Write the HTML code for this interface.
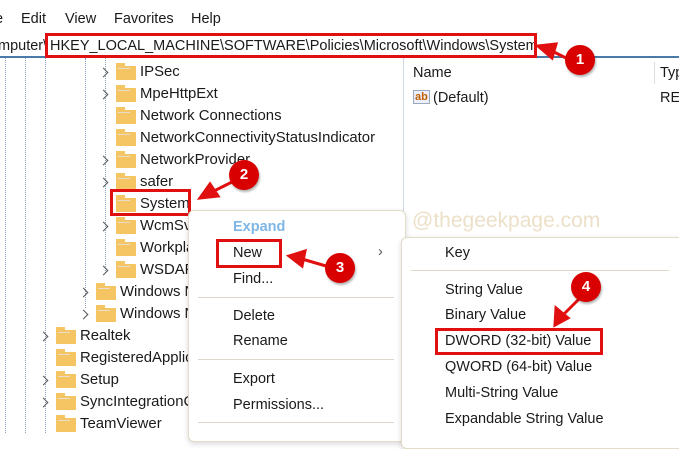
<!DOCTYPE html><html><head><style>
body{margin:0;width:679px;height:433px;overflow:hidden;background:#fff;font-family:"Liberation Sans",sans-serif;font-size:14.5px;color:#1a1a1a;position:relative}
.a{position:absolute;white-space:nowrap}
.t{font-size:14.9px}
.f{position:absolute;width:20px;height:14px;background:#f5c463}
.f:before{content:"";position:absolute;left:0;top:-3px;width:9px;height:3px;background:#f5c463}
.f:after{content:"";position:absolute;left:2px;top:2px;width:12px;height:1px;background:#e8dccb}
.c{position:absolute;width:6px;height:6px;border-right:1.5px solid #555;border-bottom:1.5px solid #555;transform:rotate(-45deg)}
.v{position:absolute;border-left:1px dotted #8aa0c0}
.m{position:absolute;background:#fff;border:1px solid #e2dcc8;border-radius:6px;box-shadow:0 2px 6px rgba(0,0,0,.15)}
.sep{position:absolute;height:1px;background:#ddd8c8}
.rb{position:absolute;border:3px solid #e01010}
.n{position:absolute;width:30px;height:30px;border-radius:50%;background:#d80000;color:#fff;font-weight:bold;font-size:15px;text-align:center;line-height:30px;box-shadow:1px 2px 2px rgba(0,0,0,.3)}
</style></head><body>
<div class="a" style="left:-5px;top:11px">e</div>
<div class="a" style="left:21px;top:11px">Edit</div>
<div class="a" style="left:65px;top:11px">View</div>
<div class="a" style="left:114px;top:11px">Favorites</div>
<div class="a" style="left:191px;top:11px">Help</div>
<div style="position:absolute;left:0;top:56px;width:679px;height:2px;background:#4a7aa8"></div>
<div class="a" style="left:-2px;top:38px">mputer\</div>
<div class="a" style="left:50px;top:38px">HKEY_LOCAL_MACHINE\SOFTWARE\Policies\Microsoft\Windows\System</div>
<div class="rb" style="left:45px;top:33px;width:486px;height:19px"></div>
<div style="position:absolute;left:403px;top:58px;width:1px;height:375px;background:#d0d8e4"></div>
<div style="position:absolute;left:654px;top:62px;width:1px;height:22px;background:#ddd"></div>
<div class="a" style="left:413px;top:65px">Name</div>
<div class="a" style="left:660px;top:65px">Typ</div>
<div class="a" style="left:413px;top:90px;font-size:11px;font-weight:bold;color:#c06000;border:1px solid #9ab;background:#eef;padding:0 1px">ab</div>
<div class="a" style="left:433px;top:90px">(Default)</div>
<div class="a" style="left:660px;top:90px">RE</div>
<div class="v" style="left:5px;top:58px;height:375px"></div>
<div class="v" style="left:25px;top:58px;height:375px"></div>
<div class="v" style="left:45px;top:58px;height:375px"></div>
<div class="v" style="left:85px;top:58px;height:250px"></div>
<div class="v" style="left:105px;top:58px;height:215px"></div>
<div class="c" style="left:100px;top:69px"></div><div class="f" style="left:116px;top:66px"></div><div class="a t" style="left:140px;top:64px">IPSec</div>
<div class="c" style="left:100px;top:91px"></div><div class="f" style="left:116px;top:88px"></div><div class="a t" style="left:140px;top:86px">MpeHttpExt</div>
<div class="f" style="left:116px;top:110px"></div><div class="a t" style="left:140px;top:108px">Network Connections</div>
<div class="f" style="left:116px;top:132px"></div><div class="a t" style="left:140px;top:130px">NetworkConnectivityStatusIndicator</div>
<div class="c" style="left:100px;top:157px"></div><div class="f" style="left:116px;top:154px"></div><div class="a t" style="left:140px;top:152px">NetworkProvider</div>
<div class="c" style="left:100px;top:179px"></div><div class="f" style="left:116px;top:176px"></div><div class="a t" style="left:140px;top:174px">safer</div>
<div class="f" style="left:116px;top:198px"></div><div class="a t" style="left:140px;top:196px">System</div>
<div class="rb" style="left:110px;top:189px;width:75px;height:21px"></div>
<div class="c" style="left:100px;top:223px"></div><div class="f" style="left:116px;top:220px"></div><div class="a t" style="left:140px;top:218px">WcmSvc</div>
<div class="f" style="left:116px;top:242px"></div><div class="a t" style="left:140px;top:240px">Workplace</div>
<div class="c" style="left:100px;top:267px"></div><div class="f" style="left:116px;top:264px"></div><div class="a t" style="left:140px;top:262px">WSDAPI</div>
<div class="c" style="left:80px;top:289px"></div><div class="f" style="left:96px;top:286px"></div><div class="a t" style="left:120px;top:284px">Windows NT</div>
<div class="c" style="left:80px;top:311px"></div><div class="f" style="left:96px;top:308px"></div><div class="a t" style="left:120px;top:306px">Windows NT</div>
<div class="c" style="left:40px;top:333px"></div><div class="f" style="left:56px;top:330px"></div><div class="a t" style="left:80px;top:328px">Realtek</div>
<div class="f" style="left:56px;top:352px"></div><div class="a t" style="left:80px;top:350px">RegisteredApplications</div>
<div class="c" style="left:40px;top:377px"></div><div class="f" style="left:56px;top:374px"></div><div class="a t" style="left:80px;top:372px">Setup</div>
<div class="c" style="left:40px;top:399px"></div><div class="f" style="left:56px;top:396px"></div><div class="a t" style="left:80px;top:394px">SyncIntegrationClients</div>
<div class="f" style="left:56px;top:418px"></div><div class="a t" style="left:80px;top:416px">TeamViewer</div>
<div class="a" style="left:412px;top:209px;font-size:21px;color:#ece0c8">@thegeekpage.com</div>
<div class="m" style="left:188px;top:210px;width:216px;height:230px"></div>
<div class="a" style="left:233px;top:219px;font-weight:bold;color:#7fb6e6">Expand</div>
<div class="a" style="left:233px;top:245px">New</div>
<div class="a" style="left:378px;top:244px;color:#555">›</div>
<div class="a" style="left:233px;top:271px">Find...</div>
<div class="sep" style="left:198px;top:297px;width:196px"></div>
<div class="a" style="left:233px;top:308px">Delete</div>
<div class="a" style="left:233px;top:333px">Rename</div>
<div class="sep" style="left:198px;top:359px;width:196px"></div>
<div class="a" style="left:233px;top:371px">Export</div>
<div class="a" style="left:233px;top:397px">Permissions...</div>
<div class="sep" style="left:198px;top:422px;width:196px"></div>
<div class="rb" style="left:216px;top:239px;width:60px;height:23px"></div>
<div class="m" style="left:401px;top:237px;width:290px;height:210px"></div>
<div class="a" style="left:445px;top:245px">Key</div>
<div class="sep" style="left:411px;top:270px;width:258px"></div>
<div class="a" style="left:445px;top:282px">String Value</div>
<div class="a" style="left:445px;top:307px">Binary Value</div>
<div class="a" style="left:445px;top:333px">DWORD (32-bit) Value</div>
<div class="a" style="left:445px;top:359px">QWORD (64-bit) Value</div>
<div class="a" style="left:445px;top:385px">Multi-String Value</div>
<div class="a" style="left:445px;top:411px">Expandable String Value</div>
<div class="rb" style="left:435px;top:328px;width:162px;height:21px"></div>
<svg style="position:absolute;left:0;top:0" width="679" height="433">
<g fill="#e01010" stroke="#e01010" stroke-width="3" stroke-linecap="round">
<line x1="566" y1="58" x2="550" y2="50"/><polygon points="538,46 556,44 552,58"/>
<line x1="232" y1="182" x2="212" y2="192"/><polygon points="200,198 210,184 218,196"/>
<line x1="326" y1="266" x2="302" y2="259"/><polygon points="289,256 305,251 302,266"/>
<line x1="578" y1="300" x2="562" y2="316"/><polygon points="555,325 556,308 568,318"/>
</g></svg>
<div class="n" style="left:565px;top:45px">1</div>
<div class="n" style="left:229px;top:160px">2</div>
<div class="n" style="left:325px;top:253px">3</div>
<div class="n" style="left:571px;top:272px">4</div>
</body></html>
